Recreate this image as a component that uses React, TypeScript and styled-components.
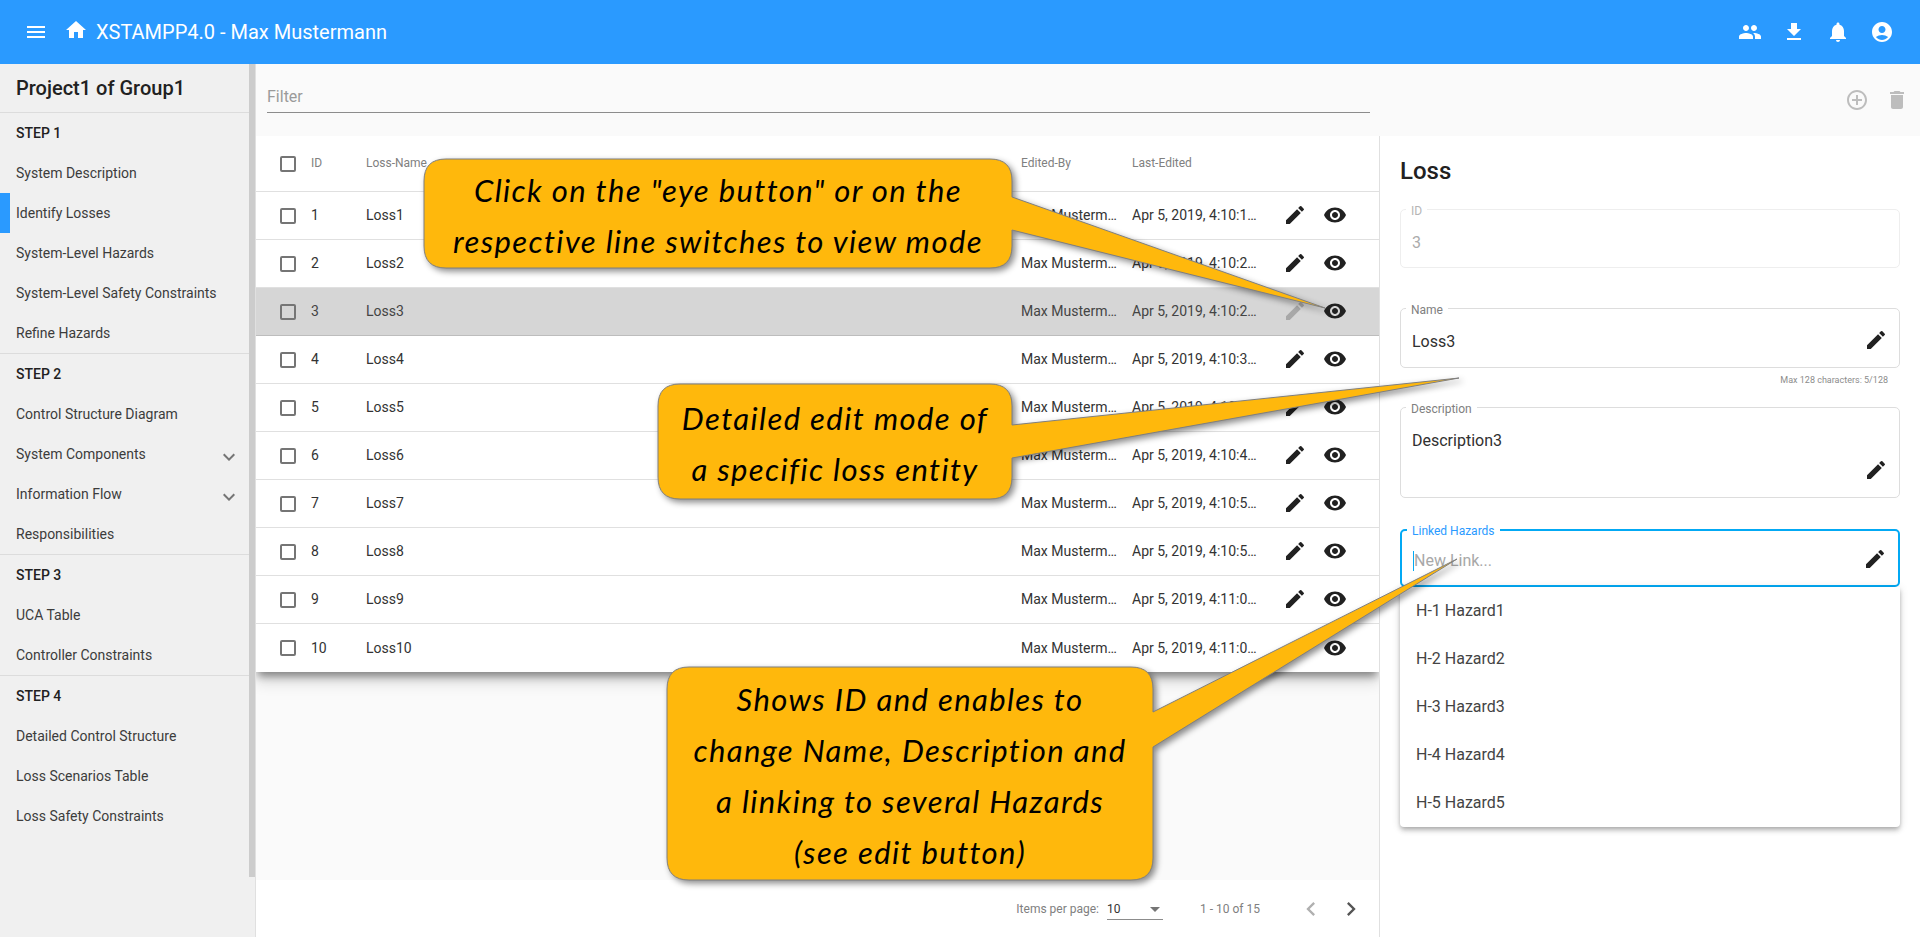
import React from 'react';
import styled, { createGlobalStyle } from 'styled-components';
import {
    MdAccountCircle,
    MdAddCircleOutline,
    MdArrowDropDown,
    MdChevronLeft,
    MdChevronRight,
    MdDelete,
    MdEdit,
    MdExpandMore,
    MdFileDownload,
    MdHome,
    MdMenu,
    MdNotifications,
    MdPeople,
    MdVisibility,
} from 'react-icons/md';

const GlobalStyle = createGlobalStyle`
    html, body {
        margin: 0;
        padding: 0;
        height: 100%;
        overflow: hidden;
    }
    body {
        font-family: Roboto, "Liberation Sans", sans-serif;
        color: rgba(0, 0, 0, 0.87);
    }
    * {
        box-sizing: border-box;
    }
`;

const Page = styled.div`
    position: relative;
    width: 1920px;
    height: 937px;
    overflow: hidden;
    display: flex;
    flex-direction: column;
    background: #fff;
`;

/* toolbar */
const Toolbar = styled.header`
    height: 64px;
    flex: none;
    display: flex;
    align-items: center;
    padding: 0 26px 0 24px;
    background: #2a9aff;
    color: #fff;
`;

const ToolbarIcon = styled.span`
    display: flex;
    font-size: 24px;
`;

const HomeIcon = styled(ToolbarIcon)`
    margin: -4px 8px 0 16px;
`;

const AppTitle = styled.h1`
    flex: 1;
    margin: 0;
    font-size: 20px;
    font-weight: 400;
    line-height: 64px;
`;

const ToolbarActions = styled.div`
    display: flex;
    gap: 20px;
`;

/* sidebar */
const Body = styled.div`
    flex: 1;
    display: flex;
    min-height: 0;
`;

const Sidebar = styled.aside`
    width: 256px;
    flex: none;
    display: flex;
    background: #f0f0f0;
    border-right: 1px solid #e0e0e0;
`;

const Nav = styled.nav`
    width: 249px;
    flex: none;
`;

const ScrollThumb = styled.div`
    width: 6px;
    height: 813px;
    background: #cccccc;
`;

const ProjectTitle = styled.div`
    height: 49px;
    padding-left: 16px;
    font-size: 20px;
    font-weight: 500;
    line-height: 48px;
    color: #212121;
    border-bottom: 1px solid #dcdcdc;
`;

const Section = styled.section`
    border-bottom: 1px solid #dcdcdc;
    &:last-child {
        border-bottom: 0;
    }
`;

const StepTitle = styled.div`
    height: 40px;
    padding-left: 16px;
    font-size: 14px;
    font-weight: 500;
    line-height: 40px;
    color: #212121;
`;

const NavItem = styled.div<{ $active?: boolean }>`
    height: 40px;
    display: flex;
    align-items: center;
    justify-content: space-between;
    padding: 0 8px 0 ${props => (props.$active ? '6px' : '16px')};
    font-size: 14px;
    color: #3c3c3c;
    border-left: ${props => (props.$active ? '10px solid #2a9aff' : '0')};
`;

const NavChevron = styled.span`
    display: flex;
    margin-top: 6px;
    font-size: 24px;
    color: #757575;
`;

/* main */
const Main = styled.main`
    flex: 1;
    display: flex;
    flex-direction: column;
    min-width: 0;
`;

const FilterBar = styled.div`
    height: 72px;
    flex: none;
    display: flex;
    background: #fafafa;
    padding: 0 16px 0 11px;
`;

const FilterInput = styled.div`
    width: 1103px;
    height: 49px;
    flex: none;
    border-bottom: 1px solid #8c8c8c;
    font-size: 16px;
    line-height: 65px;
    color: #9a9a9a;
`;

const FilterActions = styled.div`
    display: flex;
    gap: 16px;
    margin-left: 475px;
    padding-top: 24px;
    font-size: 24px;
    color: #bdbdbd;
`;

const Content = styled.div`
    flex: 1;
    display: flex;
    min-height: 0;
`;

const TableArea = styled.div`
    width: 1124px;
    flex: none;
    display: flex;
    flex-direction: column;
    overflow: hidden;
    border-right: 1px solid #e0e0e0;
`;

const Table = styled.div`
    position: relative;
    z-index: 1;
    background: #fff;
    box-shadow: 0 6px 8px -2px rgba(0, 0, 0, 0.4), 0 10px 14px 0 rgba(0, 0, 0, 0.14);
`;

const Row = styled.div<{ $selected?: boolean; $header?: boolean }>`
    height: ${props => (props.$header ? '56px' : '48px')};
    display: grid;
    grid-template-columns: 31px 55px 655px 111px 151px 40px 40px;
    align-items: center;
    padding-left: 24px;
    font-size: ${props => (props.$header ? '12px' : '14px')};
    color: ${props => (props.$header ? '#808080' : props.$selected ? '#444' : '#333')};
    background: ${props => (props.$selected ? '#d6d6d6' : '#fff')};
    border-bottom: 1px solid ${props => (props.$selected ? '#bdbdbd' : '#e0e0e0')};
    &:last-child {
        border-bottom: 0;
    }
`;

const Checkbox = styled.span`
    display: block;
    width: 16px;
    height: 16px;
    border: 2px solid #757575;
    border-radius: 2px;
`;

const Cell = styled.span<{ $pad?: number }>`
    display: block;
    min-width: 0;
    margin-top: -1px;
    padding-right: ${props => props.$pad || 0}px;
    white-space: nowrap;
    overflow: hidden;
    text-overflow: ellipsis;
`;

const HeaderCell = styled(Cell)`
    margin-top: -2px;
`;

const RowIcon = styled.span<{ $disabled?: boolean }>`
    display: flex;
    margin-top: -1px;
    font-size: 24px;
    color: ${props => (props.$disabled ? '#a8a8a8' : '#212121')};
`;

const TableSpacer = styled.div`
    flex: 1;
    background: #fafafa;
`;

const Paginator = styled.div`
    height: 57px;
    flex: none;
    display: flex;
    align-items: center;
    justify-content: flex-end;
    padding: 0 8px 0 0;
    font-size: 12px;
    color: #808080;
`;

const PageSelect = styled.div`
    width: 56px;
    height: 23px;
    display: flex;
    align-items: center;
    justify-content: space-between;
    margin: 0 37px 0 8px;
    padding-top: 1px;
    color: #333;
    border-bottom: 1px solid #8c8c8c;
`;

const SelectArrow = styled.span`
    display: flex;
    font-size: 24px;
    margin-right: -4px;
    color: #757575;
`;

const PageRange = styled.span`
    margin-right: 31px;
`;

const PageButton = styled.span<{ $disabled?: boolean }>`
    width: 40px;
    display: flex;
    justify-content: center;
    font-size: 28px;
    color: ${props => (props.$disabled ? '#b0b0b0' : '#555')};
`;

/* detail panel */
const DetailPanel = styled.div`
    flex: 1;
    padding: 20px 20px 0 20px;
    background: #fff;
`;

const DetailTitle = styled.h2`
    margin: 0 0 24px;
    height: 29px;
    font-size: 24px;
    font-weight: 500;
    line-height: 30px;
    color: #212121;
`;

const Field = styled.div<{ $height: number; $gap: number; $tone?: 'disabled' | 'focus' }>`
    position: relative;
    height: ${props => props.$height}px;
    margin-bottom: ${props => props.$gap}px;
    padding: 0 11px;
    border: ${props =>
        props.$tone === 'focus'
            ? '2px solid #03a9f4'
            : props.$tone === 'disabled'
            ? '1px solid #eeeeee'
            : '1px solid #dddddd'};
    border-radius: 5px;
    font-size: 16px;
    color: ${props => (props.$tone === 'disabled' ? '#ababab' : '#303030')};
`;

const FieldLabel = styled.label<{ $tone?: 'disabled' | 'focus' }>`
    position: absolute;
    top: ${props => (props.$tone === 'focus' ? '-7px' : '-6px')};
    left: 5px;
    padding: 0 5px;
    background: #fff;
    font-size: 12px;
    line-height: 14px;
    color: ${props =>
        props.$tone === 'focus' ? '#2a9aff' : props.$tone === 'disabled' ? '#b5b5b5' : '#808080'};
`;

const FieldValue = styled.div`
    padding-top: 21px;
    line-height: 24px;
`;

const Placeholder = styled.div`
    margin-top: 20px;
    line-height: 24px;
    color: #a8a8a8;
    border-left: 1px solid #03a9f4;
    height: 20px;
    display: flex;
    align-items: center;
`;

const FieldIcon = styled.span<{ $bottom: number }>`
    position: absolute;
    right: 11px;
    bottom: ${props => props.$bottom}px;
    display: flex;
    font-size: 24px;
    color: #212121;
`;

const Hint = styled.div`
    position: absolute;
    right: 11px;
    bottom: -19px;
    font-size: 9px;
    line-height: 12px;
    color: #8c8c8c;
`;

const Menu = styled.div`
    position: absolute;
    top: calc(100% + 2px);
    left: -2px;
    right: -2px;
    background: #fff;
    border-radius: 0 0 4px 4px;
    box-shadow: 0 2px 4px -1px rgba(0, 0, 0, 0.2), 0 4px 5px 0 rgba(0, 0, 0, 0.14),
        0 1px 10px 0 rgba(0, 0, 0, 0.12);
`;

const MenuOption = styled.div`
    height: 48px;
    padding-left: 16px;
    font-size: 16px;
    line-height: 48px;
    color: #444;
`;

/* callouts lie over the whole page */
const CalloutLayer = styled.svg`
    position: absolute;
    top: 0;
    left: 0;
    z-index: 2;
    pointer-events: none;
    filter: drop-shadow(3px 3px 3px rgba(0, 0, 0, 0.45));
`;

const CalloutText = styled.div<{ $x: number; $y: number; $w: number; $h: number; $spacing: number }>`
    position: absolute;
    z-index: 3;
    left: ${props => props.$x}px;
    top: ${props => props.$y}px;
    width: ${props => props.$w}px;
    height: ${props => props.$h}px;
    display: flex;
    flex-direction: column;
    align-items: center;
    justify-content: center;
    padding-top: 5px;
    font-family: Lato, "Open Sans", sans-serif;
    font-style: italic;
    font-size: 31px;
    line-height: 51px;
    letter-spacing: ${props => props.$spacing}px;
    color: #000;
    white-space: nowrap;
`;

const steps = [
    {
        title: 'STEP 1',
        items: [
            { label: 'System Description' },
            { label: 'Identify Losses', active: true },
            { label: 'System-Level Hazards' },
            { label: 'System-Level Safety Constraints' },
            { label: 'Refine Hazards' },
        ],
    },
    {
        title: 'STEP 2',
        items: [
            { label: 'Control Structure Diagram' },
            { label: 'System Components', expandable: true },
            { label: 'Information Flow', expandable: true },
            { label: 'Responsibilities' },
        ],
    },
    {
        title: 'STEP 3',
        items: [{ label: 'UCA Table' }, { label: 'Controller Constraints' }],
    },
    {
        title: 'STEP 4',
        items: [
            { label: 'Detailed Control Structure' },
            { label: 'Loss Scenarios Table' },
            { label: 'Loss Safety Constraints' },
        ],
    },
];

const seconds = ['4:10:14', '4:10:21', '4:10:27', '4:10:33', '4:10:39', '4:10:45', '4:10:51', '4:10:57', '4:11:03', '4:11:09'];

const losses = seconds.map((time, i) => ({
    id: i + 1,
    name: `Loss${i + 1}`,
    date: `Apr 5, 2019, ${time} PM`,
}));

const callouts = [
    {
        x: 424,
        y: 159,
        w: 588,
        h: 109,
        tail: [197, 230, 1325, 308],
        spacing: 1.4,
        lines: ['Click on the "eye button" or on the', 'respective line switches to view mode'],
    },
    {
        x: 658,
        y: 384,
        w: 354,
        h: 115,
        tail: [425, 458, 1459, 378],
        spacing: 1.4,
        lines: ['Detailed edit mode of', 'a specific loss entity'],
    },
    {
        x: 667,
        y: 667,
        w: 486,
        h: 213,
        tail: [712, 747, 1457, 559],
        spacing: 1.4,
        lines: [
            'Shows ID and enables to',
            'change Name, Description and',
            'a linking to several Hazards',
            '(see edit button)',
        ],
    },
];

const calloutPath = ({ x, y, w, h, tail }: any) => {
    const r = 22;
    const right = x + w;
    const bottom = y + h;
    return [
        `M${x + r} ${y}`,
        `H${right - r}`,
        `Q${right} ${y} ${right} ${y + r}`,
        `V${tail[0]}`,
        `L${tail[2]} ${tail[3]}`,
        `L${right} ${tail[1]}`,
        `V${bottom - r}`,
        `Q${right} ${bottom} ${right - r} ${bottom}`,
        `H${x + r}`,
        `Q${x} ${bottom} ${x} ${bottom - r}`,
        `V${y + r}`,
        `Q${x} ${y} ${x + r} ${y}`,
        'Z',
    ].join(' ');
};

export default function App() {
    return (
        <Page>
            <GlobalStyle />
            <Toolbar>
                <ToolbarIcon>
                    <MdMenu />
                </ToolbarIcon>
                <HomeIcon>
                    <MdHome />
                </HomeIcon>
                <AppTitle>XSTAMPP4.0 - Max Mustermann</AppTitle>
                <ToolbarActions>
                    <ToolbarIcon>
                        <MdPeople />
                    </ToolbarIcon>
                    <ToolbarIcon>
                        <MdFileDownload />
                    </ToolbarIcon>
                    <ToolbarIcon>
                        <MdNotifications />
                    </ToolbarIcon>
                    <ToolbarIcon>
                        <MdAccountCircle />
                    </ToolbarIcon>
                </ToolbarActions>
            </Toolbar>
            <Body>
                <Sidebar>
                    <Nav>
                        <ProjectTitle>Project1 of Group1</ProjectTitle>
                        {steps.map(step => (
                            <Section key={step.title}>
                                <StepTitle>{step.title}</StepTitle>
                                {step.items.map((item: any) => (
                                    <NavItem key={item.label} $active={item.active}>
                                        {item.label}
                                        {item.expandable && (
                                            <NavChevron>
                                                <MdExpandMore />
                                            </NavChevron>
                                        )}
                                    </NavItem>
                                ))}
                            </Section>
                        ))}
                    </Nav>
                    <ScrollThumb />
                </Sidebar>
                <Main>
                    <FilterBar>
                        <FilterInput>Filter</FilterInput>
                        <FilterActions>
                            <MdAddCircleOutline />
                            <MdDelete />
                        </FilterActions>
                    </FilterBar>
                    <Content>
                        <TableArea>
                            <Table>
                                <Row $header>
                                    <Checkbox />
                                    <HeaderCell>ID</HeaderCell>
                                    <HeaderCell>Loss-Name</HeaderCell>
                                    <HeaderCell>Edited-By</HeaderCell>
                                    <HeaderCell>Last-Edited</HeaderCell>
                                </Row>
                                {losses.map(loss => (
                                    <Row key={loss.id} $selected={loss.id === 3}>
                                        <Checkbox />
                                        <Cell>{loss.id}</Cell>
                                        <Cell>{loss.name}</Cell>
                                        <Cell $pad={15}>Max Mustermann</Cell>
                                        <Cell $pad={26}>{loss.date}</Cell>
                                        <RowIcon $disabled={loss.id === 3}>
                                            <MdEdit />
                                        </RowIcon>
                                        <RowIcon>
                                            <MdVisibility />
                                        </RowIcon>
                                    </Row>
                                ))}
                            </Table>
                            <TableSpacer />
                            <Paginator>
                                Items per page:
                                <PageSelect>
                                    10
                                    <SelectArrow>
                                        <MdArrowDropDown />
                                    </SelectArrow>
                                </PageSelect>
                                <PageRange>1 - 10 of 15</PageRange>
                                <PageButton $disabled>
                                    <MdChevronLeft />
                                </PageButton>
                                <PageButton>
                                    <MdChevronRight />
                                </PageButton>
                            </Paginator>
                        </TableArea>
                        <DetailPanel>
                            <DetailTitle>Loss</DetailTitle>
                            <Field $height={59} $gap={40} $tone="disabled">
                                <FieldLabel $tone="disabled">ID</FieldLabel>
                                <FieldValue>3</FieldValue>
                            </Field>
                            <Field $height={60} $gap={39}>
                                <FieldLabel>Name</FieldLabel>
                                <FieldValue>Loss3</FieldValue>
                                <FieldIcon $bottom={15}>
                                    <MdEdit />
                                </FieldIcon>
                                <Hint>Max 128 characters: 5/128</Hint>
                            </Field>
                            <Field $height={91} $gap={31}>
                                <FieldLabel>Description</FieldLabel>
                                <FieldValue>Description3</FieldValue>
                                <FieldIcon $bottom={15}>
                                    <MdEdit />
                                </FieldIcon>
                            </Field>
                            <Field $height={58} $gap={0} $tone="focus">
                                <FieldLabel $tone="focus">Linked Hazards</FieldLabel>
                                <Placeholder>New Link...</Placeholder>
                                <FieldIcon $bottom={14}>
                                    <MdEdit />
                                </FieldIcon>
                                <Menu>
                                    {[1, 2, 3, 4, 5].map(n => (
                                        <MenuOption key={n}>{`H-${n} Hazard${n}`}</MenuOption>
                                    ))}
                                </Menu>
                            </Field>
                        </DetailPanel>
                    </Content>
                </Main>
            </Body>
            <CalloutLayer width="1920" height="937">
                {callouts.map(callout => (
                    <path
                        key={callout.x}
                        d={calloutPath(callout)}
                        fill="#ffb80c"
                        stroke="#7f7f7f"
                        strokeWidth="1"
                    />
                ))}
            </CalloutLayer>
            {callouts.map(callout => (
                <CalloutText
                    key={callout.x}
                    $x={callout.x}
                    $y={callout.y}
                    $w={callout.w}
                    $h={callout.h}
                    $spacing={callout.spacing}
                >
                    {callout.lines.map(line => (
                        <span key={line}>{line}</span>
                    ))}
                </CalloutText>
            ))}
        </Page>
    );
}
